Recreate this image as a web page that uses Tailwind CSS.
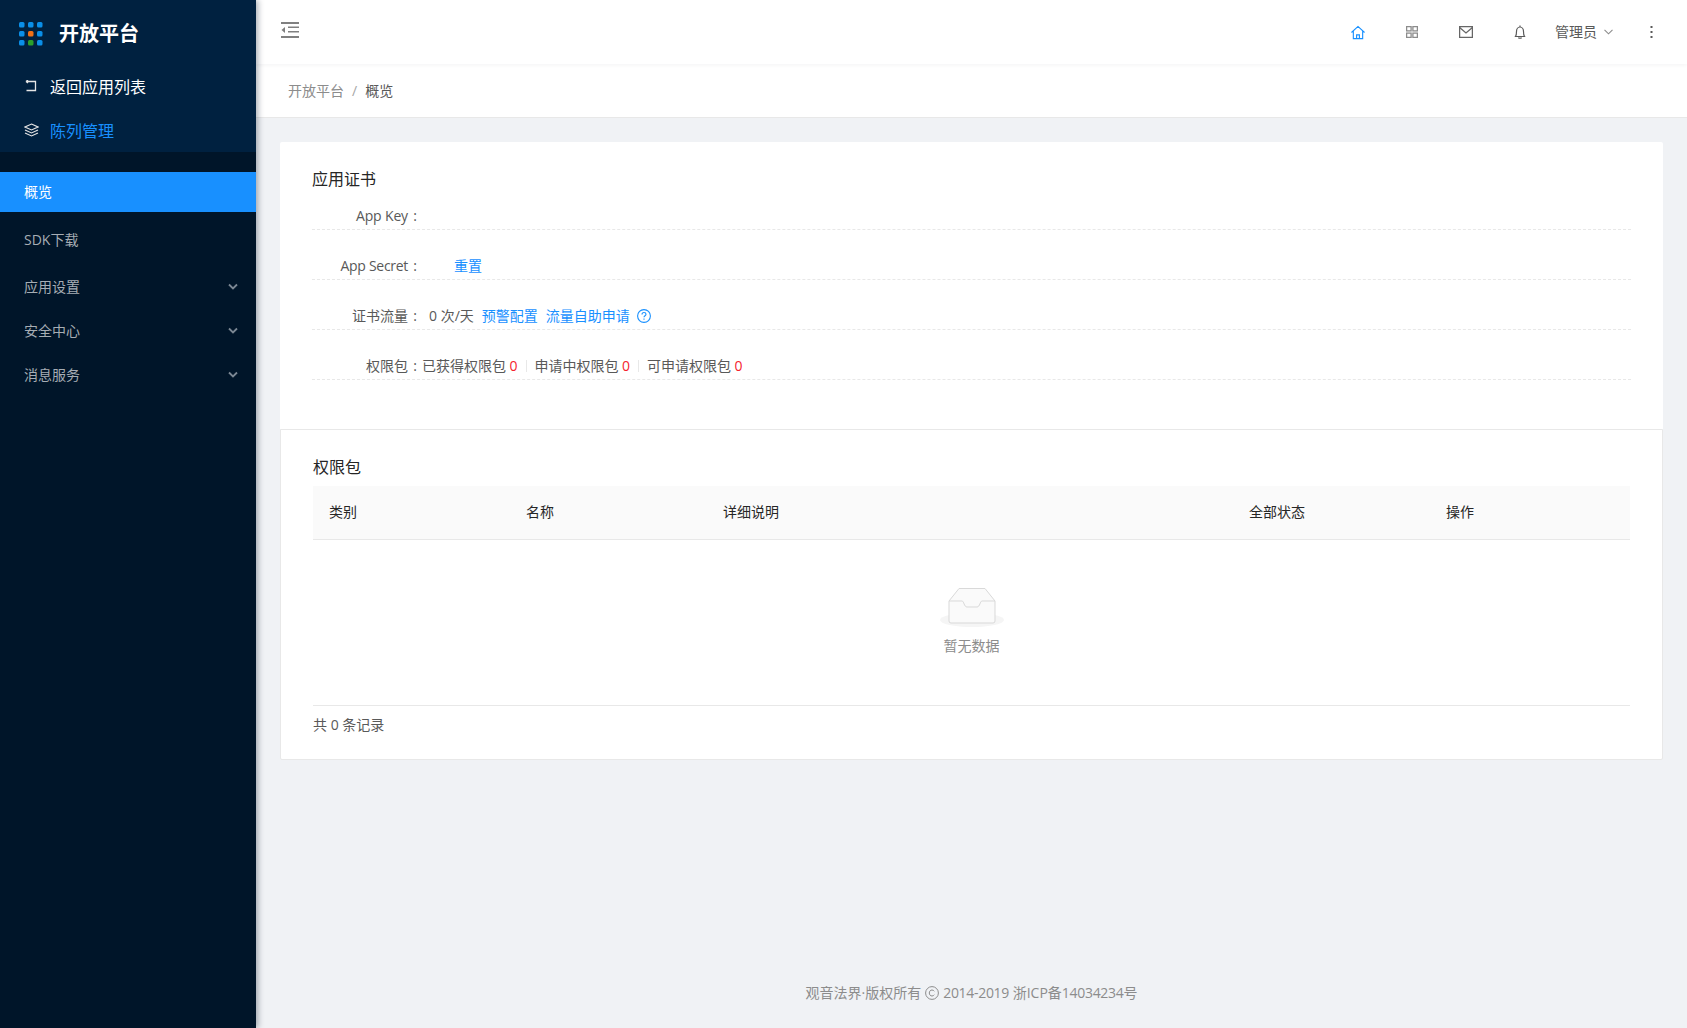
<!DOCTYPE html>
<html lang="zh">
<head>
  <meta charset="UTF-8">
  <title>开放平台</title>
  <script src="https://cdn.jsdelivr.net/npm/@tailwindcss/browser@4"></script>
</head>
<body class="bg-[#f0f2f5] font-['Open_Sans','Noto_Sans_CJK_SC',sans-serif] text-sm text-[#595959]">
  <div class="flex h-[1028px] overflow-hidden">
    <!-- Sidebar -->
    <aside class="relative z-20 w-[256px] shrink-0 bg-[#001529] shadow-[2px_0_6px_rgba(0,21,41,0.35)]">
      <div class="h-[152px] bg-[#002140]">
        <div class="flex h-[65px] items-center pl-[19px] pt-[3px]">
          <svg class="w-[24px] h-[24px]" viewBox="0 0 24 24">
            <rect x="0" y="0" width="5.500" height="5.500" rx="1.500" fill="#0a8fe8"/><rect x="9" y="0" width="5.500" height="5.500" rx="1.500" fill="#0a8fe8"/><rect x="18" y="0" width="5.500" height="5.500" rx="1.500" fill="#0a8fe8"/>
            <rect x="0" y="9" width="5.500" height="5.500" rx="1.500" fill="#0a8fe8"/><rect x="9" y="9" width="5.500" height="5.500" rx="1.500" fill="#f07016"/><rect x="18" y="9" width="5.500" height="5.500" rx="1.500" fill="#0a8fe8"/>
            <rect x="0" y="18" width="5.500" height="5.500" rx="1.500" fill="#0a8fe8"/><rect x="9" y="18" width="5.500" height="5.500" rx="1.500" fill="#2ba02b"/><rect x="18" y="18" width="5.500" height="5.500" rx="1.500" fill="#0a8fe8"/>
          </svg>
          <span class="ml-[16px] text-[20px] font-bold text-white">开放平台</span>
        </div>
        <div class="flex h-[44px] items-center pl-[25px] text-white">
          <svg class="-mt-[3px] w-[12px] h-[12px]" viewBox="0 0 12 12" fill="none" stroke="#e5e5e5" stroke-width="1.3"><path d="M1 1.500h9.500v9H1.500M1 1.500l2-1.500M1 1.500l2 1.500"/></svg>
          <span class="ml-[13px] text-[16px]">返回应用列表</span>
        </div>
        <div class="flex h-[44px] items-center pl-[24px] text-[#1890ff]">
          <svg class="-mt-[2px] w-[15px] h-[14px]" viewBox="0 0 15 14" fill="none" stroke="#e5e5e5" stroke-width="1.1"><path d="M7.500 1L14 4 7.500 7 1 4zM1 7l6.500 3L14 7M1 10l6.500 3L14 10"/></svg>
          <span class="ml-[11px] text-[16px]">陈列管理</span>
        </div>
      </div>
      <nav class="pt-[20px] text-[#a6adb4]">
        <div class="flex h-[40px] items-center bg-[#1890ff] pb-[1px] pl-[24px] text-white">概览</div>
        <div class="mt-[8px] flex h-[40px] items-center pl-[24px]">SDK下载</div>
        <div class="mt-[7px] flex h-[40px] items-center justify-between pl-[24px] pr-[18px]">
          <span>应用设置</span>
          <svg class="w-[10px] h-[8px]" viewBox="0 0 10 8" fill="none" stroke="#7b8793" stroke-width="1.8"><path d="M1 1.500l4 4 4-4"/></svg>
        </div>
        <div class="mt-[4px] flex h-[40px] items-center justify-between pl-[24px] pr-[18px]">
          <span>安全中心</span>
          <svg class="w-[10px] h-[8px]" viewBox="0 0 10 8" fill="none" stroke="#7b8793" stroke-width="1.8"><path d="M1 1.500l4 4 4-4"/></svg>
        </div>
        <div class="mt-[4px] flex h-[40px] items-center justify-between pl-[24px] pr-[18px]">
          <span>消息服务</span>
          <svg class="w-[10px] h-[8px]" viewBox="0 0 10 8" fill="none" stroke="#7b8793" stroke-width="1.8"><path d="M1 1.500l4 4 4-4"/></svg>
        </div>
      </nav>
    </aside>

    <!-- Main -->
    <div class="flex min-w-0 flex-1 flex-col">
      <header class="relative z-10 flex h-[64px] shrink-0 items-center bg-white pl-[25px] shadow-[0_1px_4px_rgba(0,21,41,0.05)]">
        <svg class="-mt-[4px] w-[18px] h-[16px]" viewBox="0 0 18 16" fill="#808080">
          <rect x="0" y="0" width="18" height="2"/><rect x="7" y="4.500" width="11" height="1.500"/><rect x="7" y="9" width="11" height="1.500"/><rect x="0" y="14" width="18" height="2"/><path d="M4 5v6L0.500 8z"/>
        </svg>
        <div class="ml-auto flex items-center">
          <svg class="w-[14px] h-[15px]" viewBox="0 0 15 15" fill="none" stroke="#1890ff" stroke-width="1.200"><path d="M0.500 7.500L7.500 1l7 6.500M2.500 6v8h10V6M6 14v-4h3v4"/></svg>
          <svg class="ml-[41px] w-[12px] h-[12px]" viewBox="0 0 12 12" fill="none" stroke="#8c8c8c" stroke-width="1.300"><rect x="0.600" y="0.600" width="4.500" height="4.300"/><rect x="6.900" y="0.600" width="4.500" height="4.300"/><rect x="0.600" y="7.100" width="4.500" height="4.300"/><rect x="6.900" y="7.100" width="4.500" height="4.300"/></svg>
          <svg class="ml-[41px] w-[14px] h-[12px]" viewBox="0 0 14 12" fill="none" stroke="#666" stroke-width="1.300"><rect x="0.600" y="0.600" width="12.800" height="10.800"/><path d="M0.600 1.500L7 7l6.400-5.500"/></svg>
          <svg class="ml-[41px] w-[12px] h-[14px]" viewBox="0 0 12 14" fill="none" stroke="#595959" stroke-width="1.200"><path d="M1.500 11.500c.8-1 1-2 1-5C2.500 4 4 2 6 2s3.500 2 3.500 4.500c0 3 .2 4 1 5zM6 0.500V2M4.500 12.500c.3 1 2.700 1 3 0"/></svg>
          <span class="ml-[29px] text-[#595959]">管理员</span>
          <svg class="ml-[7px] w-[9px] h-[6px]" viewBox="0 0 9 6" fill="none" stroke="#8c8c8c" stroke-width="1.100"><path d="M0.500 0.800l4 4 4-4"/></svg>
          <svg class="ml-[37px] mr-[34px] w-[3px] h-[12px]" viewBox="0 0 3 12" fill="#595959"><rect x="0.500" y="0" width="2" height="2"/><rect x="0.500" y="5" width="2" height="2"/><rect x="0.500" y="10" width="2" height="2"/></svg>
        </div>
      </header>

      <div class="flex h-[54px] shrink-0 items-center border-b border-[#e8e8e8] bg-white pl-[32px]">
        <span class="text-[#8c8c8c]">开放平台</span>
        <span class="mx-[8px] text-[#a6a6a6]">/</span>
        <span class="text-[#595959]">概览</span>
      </div>

      <main class="flex flex-1 flex-col px-[24px] pt-[24px]">
        <!-- 应用证书 -->
        <section class="h-[287px] rounded-t-[2px] bg-white px-[32px] pt-[25px]">
          <h2 class="h-[24px] text-[16px] leading-[24px] text-[#262626]">应用证书</h2>
          <div class="flex h-[39px] items-center border-b border-dashed border-[#e8e8e8] pt-[11px]">
            <span class="flex w-[110px] justify-end"><span class="tracking-[-0.15px]">App Key</span><span class="w-[14px] text-center">:</span></span>
          </div>
          <div class="flex h-[50px] items-center border-b border-dashed border-[#e8e8e8] pt-[22px]">
            <span class="flex w-[110px] justify-end"><span class="tracking-[-0.3px]">App Secret</span><span class="w-[14px] text-center">:</span></span>
            <a class="ml-[32px] text-[#1890ff]">重置</a>
          </div>
          <div class="flex h-[50px] items-center border-b border-dashed border-[#e8e8e8] pt-[22px]">
            <span class="flex w-[110px] justify-end">证书流量<span class="w-[14px] text-center">:</span></span>
            <span class="ml-[7px]">0 次/天</span>
            <a class="ml-[8px] text-[#1890ff]">预警配置</a>
            <a class="ml-[8px] text-[#1890ff]">流量自助申请</a>
            <svg class="ml-[7px] w-[14px] h-[14px]" viewBox="0 0 14 14" fill="none" stroke="#1890ff" stroke-width="1.100"><circle cx="7" cy="7" r="6.400"/><path d="M5 5.500C5 4.200 6 3.500 7 3.500s2 .7 2 1.800c0 1.400-2 1.500-2 3M7 9.500v1.200"/></svg>
          </div>
          <div class="flex h-[50px] items-center border-b border-dashed border-[#e8e8e8] pt-[22px]">
            <span class="flex w-[110px] justify-end">权限包<span class="w-[14px] text-center">:</span></span>
            <span>已获得权限包</span><span class="ml-[3.500px] text-[#f5222d]">0</span>
            <span class="mx-[8px] h-[12px] w-px bg-[#e8e8e8]"></span>
            <span>申请中权限包</span><span class="ml-[3.500px] text-[#f5222d]">0</span>
            <span class="mx-[8px] h-[12px] w-px bg-[#e8e8e8]"></span>
            <span>可申请权限包</span><span class="ml-[3.500px] text-[#f5222d]">0</span>
          </div>
        </section>

        <!-- 权限包 -->
        <section class="h-[331px] rounded-b-[2px] border border-[#e8e8e8] bg-white px-[32px] pt-[25px]">
          <h2 class="h-[31px] text-[16px] leading-[24px] text-[#262626]">权限包</h2>
          <div class="grid h-[54px] grid-cols-[197px_197px_526px_197px_1fr] items-center border-b border-[#e8e8e8] bg-[#fafafa] pb-[2px] text-[#262626]">
            <span class="pl-[16px]">类别</span>
            <span class="pl-[16px]">名称</span>
            <span class="pl-[16px]">详细说明</span>
            <span class="pl-[16px]">全部状态</span>
            <span class="pl-[16px]">操作</span>
          </div>
          <div class="flex h-[166px] flex-col items-center border-b border-[#e8e8e8] pt-[47px]">
            <svg class="w-[64px] h-[40px]" viewBox="0 0 64 40">
              <ellipse cx="32" cy="33" rx="32" ry="7" fill="#f5f5f5"/>
              <path d="M9 14L19 1.500h26L55 14v20a2 2 0 0 1-2 2H11a2 2 0 0 1-2-2z" fill="#fafafa" stroke="#d9d9d9" stroke-width="1"/>
              <path d="M9 14h13c2 0 2 6 5 6h10c3 0 3-6 5-6h13" fill="none" stroke="#d9d9d9" stroke-width="1"/>
            </svg>
            <span class="mt-[9px] text-[#8c8c8c]">暂无数据</span>
          </div>
          <div class="pt-[8px] leading-[22px]">共 0 条记录</div>
        </section>

        <footer class="mt-auto flex items-center justify-center gap-[4px] pb-[25px] text-[#8c8c8c]">
          <span>观音法界·版权所有</span>
          <svg class="w-[14px] h-[14px]" viewBox="0 0 14 14" fill="none" stroke="#8c8c8c" stroke-width="1"><circle cx="7" cy="7" r="6.400"/><path d="M9.300 5.300C8.800 4.500 8 4 7 4 5.400 4 4.300 5.300 4.300 7S5.400 10 7 10c1 0 1.800-.5 2.300-1.300"/></svg>
          <span><span class="tracking-[-0.3px]">2014-2019</span> 浙ICP备<span class="tracking-[-0.3px]">14034234</span>号</span>
        </footer>
      </main>
    </div>
  </div>
</body>
</html>
